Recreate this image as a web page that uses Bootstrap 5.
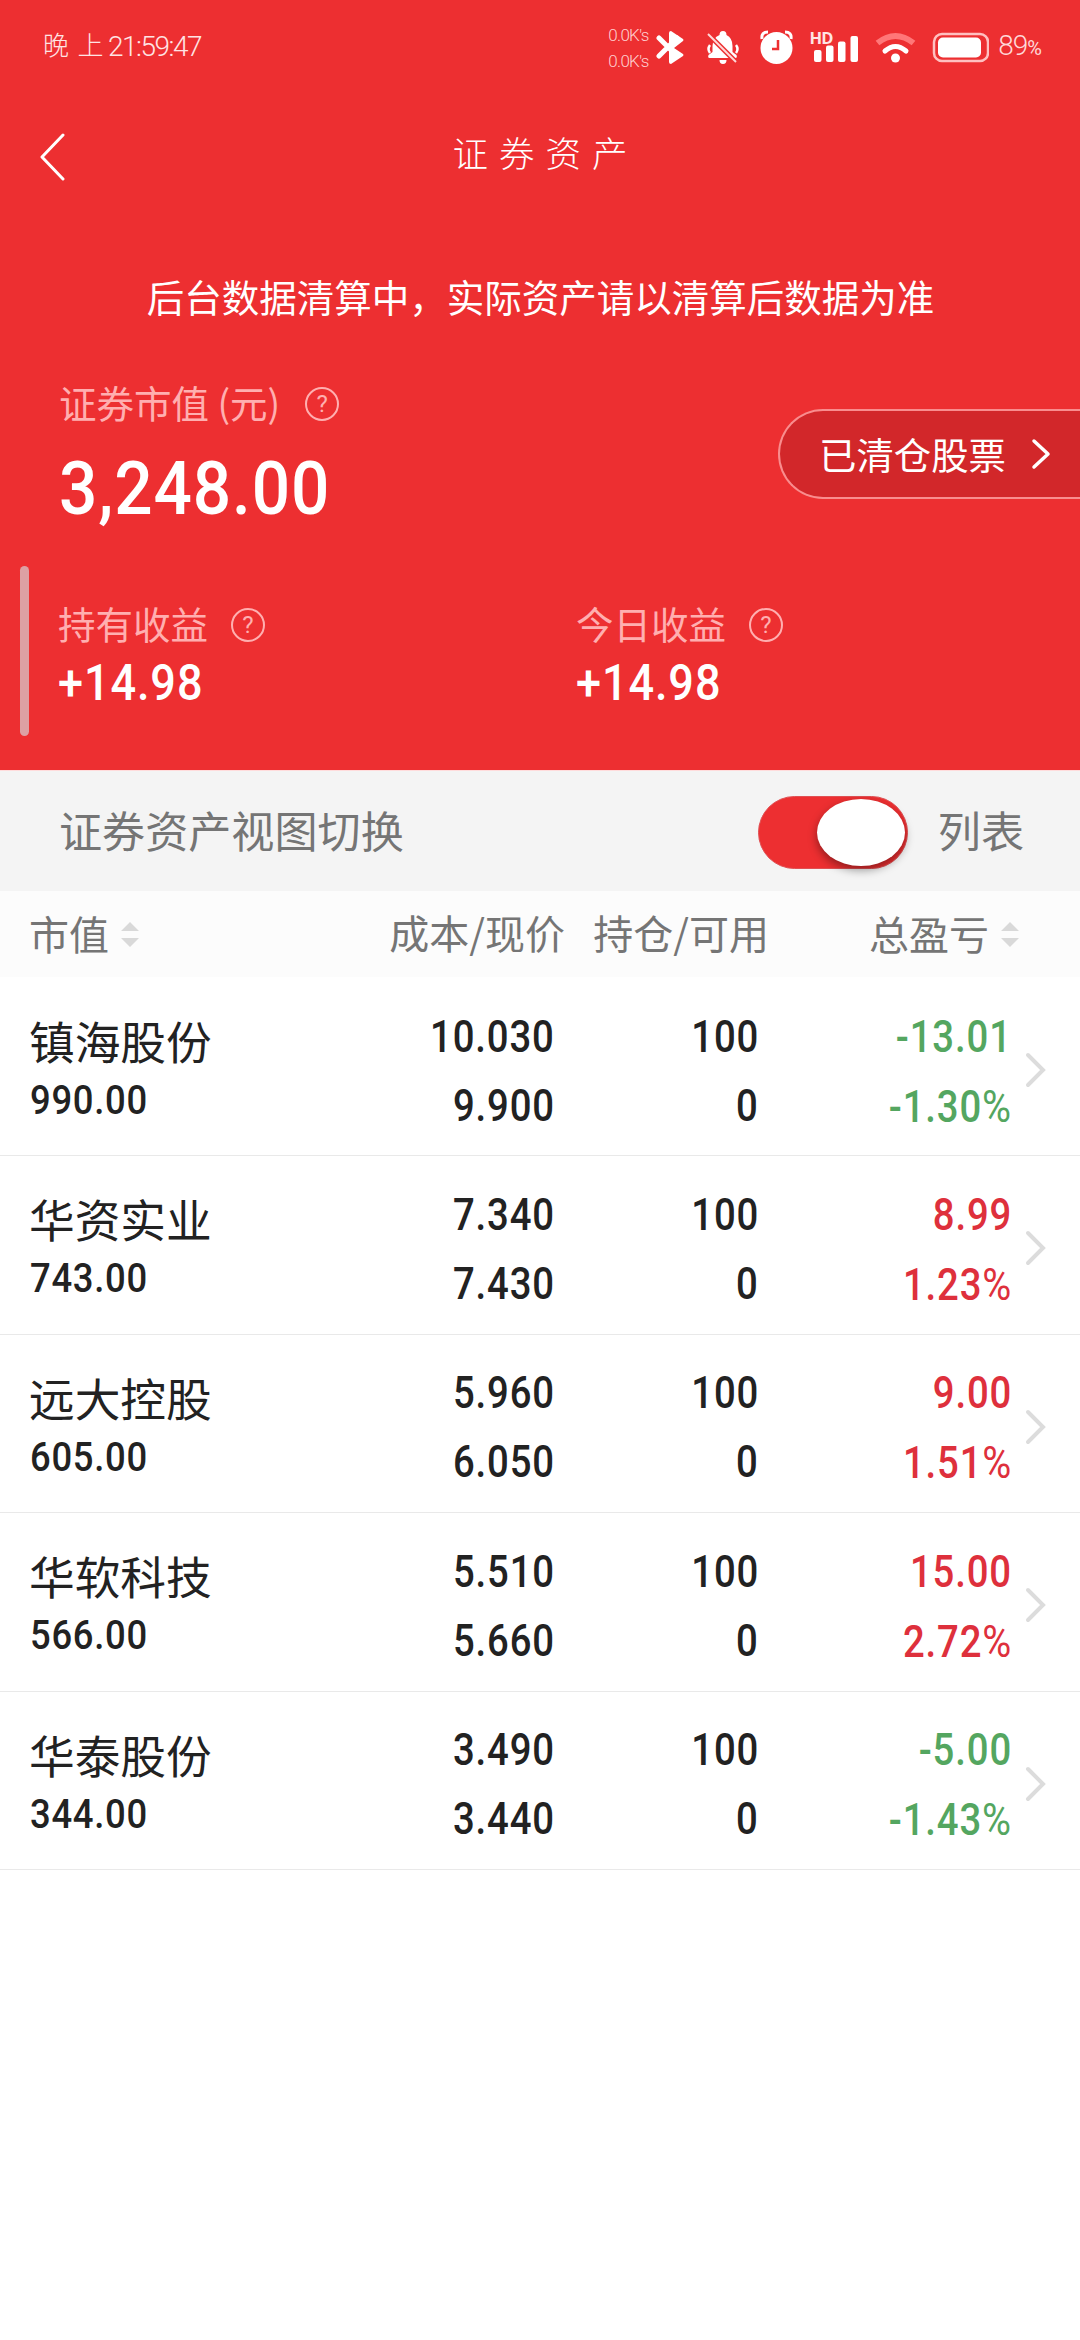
<!DOCTYPE html>
<html lang="zh-CN">
<head>
<meta charset="utf-8">
<meta name="viewport" content="width=device-width, initial-scale=1">
<title>证券资产</title>
<link href="https://cdn.jsdelivr.net/npm/bootstrap@5.3.0/dist/css/bootstrap.min.css" rel="stylesheet">
<style>
:root{--brand:#ed2f31;--soft:#ffafb0}
body{font-family:Roboto,"Noto Sans CJK SC",sans-serif;color:#222;background:#fff;width:1080px;min-height:2340px;overflow-x:hidden}
.zh{font-family:"Noto Sans CJK SC",sans-serif;white-space:nowrap}
.hero{background:var(--brand);height:770px;color:#fff}
.status-bar{height:92px;padding:0 39px 0 43px;font-weight:300}
.clock{height:92px;color:#ffe4e4}
.clock .zh{font-size:26px;letter-spacing:8.5px;font-weight:300;line-height:88px}
.clock .hms{font-size:28px;letter-spacing:-1.5px;line-height:93px;font-weight:300;margin-left:-4px}
.net-speed{font-size:17px;line-height:26px;font-weight:300;color:#ffd0d0;width:48px;letter-spacing:-.7px;padding-top:3px}
.status-icons{width:333px;height:92px}
.power{font-size:28px;font-weight:300;color:#ffd8d8;letter-spacing:-1px;line-height:94px;margin-left:9px;padding-top:2px}
.power span{font-size:20px;font-weight:400}
.title-bar{height:124px;padding:0 39px}
.title-bar .zh{font-size:35.5px;letter-spacing:11px;font-weight:300;line-height:120px;padding:0 0 3px 11px}
.title-bar svg{width:26px;height:48px;margin-top:6px}
.notice{font-size:37.5px;line-height:56px;margin-top:52px;padding-left:1px}
.soft{color:var(--soft);font-size:37.5px;line-height:50px}
.help{width:34px;height:34px;border:2px solid var(--soft);border-radius:50%;color:var(--soft);font:400 24px/30px Roboto,sans-serif;text-align:center;margin:3px 0 0 25px}
.profit-item .help{margin-left:23px}
.market{margin-top:53px;padding-left:59px;height:189px}
.num{display:inline-block;font-family:Roboto,sans-serif;font-weight:500;white-space:nowrap;transform-origin:0 50%}
.num-end{transform-origin:100% 50%}
.total{font-size:75px;line-height:88px;letter-spacing:1px;transform:scaleX(.9);margin:17px 0 0}
.cleared{width:302px;height:90px;margin-top:32px;border:2px solid #f98d8e;border-right:0;border-radius:45px 0 0 45px;background:#d2272a;padding:0 29px 0 39px;color:#fff}
.cleared .zh{font-size:37.4px;line-height:86px;padding-bottom:1px}
.profits{margin:0 0 0 20px;height:170px}
.accent{width:9px;border-radius:5px;background:#dda0a3;margin-right:29px}
.gain{font-size:49.5px;line-height:60px;letter-spacing:1px;transform:scaleX(.91);margin-top:5px}
.profit-item{padding-top:32px}
.held{flex:0 0 518px}
.view-switch{height:121px;background:#f4f4f4;border-top:1px solid #ffdcdc;padding:0 56px 0 59px;color:#757575}
.view-switch .zh{font-size:43.1px;line-height:115px;padding-bottom:3px}
.toggle{width:150px;height:73px;border-radius:37px;background:var(--brand);border:1px solid #e05053;padding:2px 2px;margin-top:2px}
.knob{width:88px;height:67px;border-radius:50%;background:#fff;box-shadow:0 4px 10px rgba(0,0,0,.4)}
.beside-toggle{margin-left:30px}
.list-head{height:87px;background:#fcfcfc;border-bottom:1px solid #fff;color:#757575;grid-template-columns:358px 178px 204px 1fr;padding:0 61px 0 29px}
.list-head .zh{font-size:40px;line-height:82px;padding-bottom:3px}
.sorter{width:18px;height:25px;fill:#d9d9d9}
.holding{height:178.4px;border-bottom:1px solid #e9e9e9;grid-template-columns:318px 208px 204px 253px 1fr;padding:0 0 0 29px}
.stock{font-size:45.7px;line-height:60px;padding-top:32px}
.worth{font-size:40px;line-height:48px;letter-spacing:.8px;transform:scaleX(.91);margin:7px 0 0 1px}
.pair{padding-top:24.5px}
.pair .num{font-size:43.5px;line-height:69px;letter-spacing:1px;transform:scaleX(.88)}
.pct i{font-style:normal;font-weight:400;font-size:45px}
.up{color:#de303c}.down{color:#54a660}
.go{width:22px;height:36px;margin:74px 0 0 13px}
</style>
<script src="https://cdn.jsdelivr.net/npm/bootstrap@5.3.0/dist/js/bootstrap.bundle.min.js"></script>
</head>
<body>
<header class="hero">
  <div class="status-bar d-flex justify-content-between align-items-center">
    <div class="clock d-flex"><span class="zh">晚上</span><span class="hms">21:59:47</span></div>
    <div class="d-flex align-items-center">
      <div class="net-speed"><div>0.0K's</div><div>0.0K's</div></div>
      <svg class="status-icons" viewBox="654 0 333 92">
        <path d="M657 38l18 18M657 56l18-18" stroke="#fff" stroke-width="5" stroke-linecap="round"/>
        <path d="M667 33q0-2 2-2l12 8q1 1 0 2l-9 7 9 6q1 1 0 2l-12 8q-2 0-2-2z" fill="#fff"/>
        <path d="M717.500 35q0-4 3.500-4t3.500 4q6 3 6 11v6l4 3q1 3-1 3h-26q-2 0-1-3l4-3v-6q0-8 7-11zM717.500 60h7q0 4-3.500 4t-3.500-4z" fill="#fff"/>
        <path d="M708 45q-3 4 0 8M734 45q3 4 0 8" stroke="#fff" stroke-width="2.500" fill="none"/>
        <path d="M706 34l28 28" stroke="#ed2f31" stroke-width="5"/><path d="M706 34l28 28" stroke="#ffd8d8" stroke-width="2"/>
        <circle cx="774.500" cy="48" r="16" fill="#fff"/>
        <path d="M760 39q-1-7 6-7M789 39q1-7-6-7" stroke="#fff" stroke-width="3" fill="none"/>
        <path d="M776 40v9h-6" stroke="#ed2f31" stroke-width="2.500" fill="none"/>
        <text x="807.500" y="44" font-family="Open Sans, sans-serif" font-size="16.500" font-weight="700" fill="#ffe4e4" textLength="24">HD</text>
        <g fill="#fff"><rect x="812" y="50" width="7.500" height="12" rx="2"/><rect x="824" y="45.500" width="7.500" height="16.500" rx="2"/><rect x="836" y="41.500" width="7.500" height="20.500" rx="2"/><rect x="848.500" y="36" width="7.500" height="26" rx="2"/></g>
        <path d="M875.500 43q18-14 36 0" stroke="#ff7778" stroke-width="6" fill="none"/>
        <path d="M883 51q10.500-9 21 0" stroke="#fff" stroke-width="5" stroke-linecap="round" fill="none"/>
        <circle cx="893.500" cy="58" r="4.500" fill="#fff"/>
        <rect x="932" y="34" width="54" height="27" rx="8" fill="none" stroke="#ffc0c0" stroke-width="2.500"/>
        <rect x="936" y="37.500" width="43" height="20" rx="5" fill="#fff"/>
      </svg>
      <div class="power">89<span>%</span></div>
    </div>
  </div>
  <nav class="title-bar d-flex align-items-center position-relative">
    <svg viewBox="0 0 26 48"><path d="M24 2L3 24l21 22" fill="none" stroke="#fff" stroke-width="3" stroke-linecap="round" stroke-linejoin="round"/></svg>
    <div class="zh position-absolute start-0 end-0 top-0 text-center">证券资产</div>
  </nav>
  <div class="notice zh text-center">后台数据清算中，实际资产请以清算后数据为准</div>
  <section class="market d-flex justify-content-between">
    <div>
      <div class="d-flex align-items-center"><span class="soft zh">证券市值 (元)</span><span class="help">?</span></div>
      <div class="num total">3,248.00</div>
    </div>
    <a class="cleared d-flex justify-content-between text-decoration-none align-items-center" href="#">
      <span class="zh">已清仓股票</span>
      <svg width="20" height="32" viewBox="0 0 20 32"><path d="M3 3l14 13L3 29" fill="none" stroke="#fff" stroke-width="3.500" stroke-linecap="round" stroke-linejoin="round"/></svg>
    </a>
  </section>
  <section class="profits d-flex">
    <div class="accent"></div>
    <div class="profit-item held">
      <div class="d-flex align-items-center"><span class="soft zh">持有收益</span><span class="help">?</span></div>
      <div class="num gain">+14.98</div>
    </div>
    <div class="profit-item flex-fill">
      <div class="d-flex align-items-center"><span class="soft zh">今日收益</span><span class="help">?</span></div>
      <div class="num gain">+14.98</div>
    </div>
  </section>
</header>
<section class="view-switch d-flex align-items-center">
  <span class="zh me-auto">证券资产视图切换</span>
  <div class="toggle d-flex justify-content-end" role="switch" aria-checked="true"><div class="knob"></div></div>
  <span class="zh beside-toggle">列表</span>
</section>
<main>
  <div class="list-head d-grid">
    <div class="d-flex align-items-center gap-2"><span class="zh">市值</span><svg class="sorter ms-1" viewBox="0 0 18 25"><path d="M0 9L9 0l9 9zM0 16h18l-9 9z"/></svg></div>
    <div class="zh text-end">成本/现价</div>
    <div class="zh text-end">持仓/可用</div>
    <div class="d-flex align-items-center justify-content-end gap-2"><span class="zh">总盈亏</span><svg class="sorter ms-1" viewBox="0 0 18 25"><path d="M0 9L9 0l9 9zM0 16h18l-9 9z"/></svg></div>
  </div>
  <div class="holding d-grid">
    <div><div class="stock zh">镇海股份</div><div class="num worth">990.00</div></div>
    <div class="pair text-end"><div class="num num-end">10.030</div><br><div class="num num-end">9.900</div></div>
    <div class="pair text-end"><div class="num num-end">100</div><br><div class="num num-end">0</div></div>
    <div class="pair text-end down"><div class="num num-end">-13.01</div><br><div class="num num-end pct">-1.30<i>%</i></div></div>
    <svg class="go" viewBox="0 0 22 36"><path d="M3 3l15 15L3 33" fill="none" stroke="#dcdcdc" stroke-width="4" stroke-linecap="round"/></svg>
  </div>
  <div class="holding d-grid">
    <div><div class="stock zh">华资实业</div><div class="num worth">743.00</div></div>
    <div class="pair text-end"><div class="num num-end">7.340</div><br><div class="num num-end">7.430</div></div>
    <div class="pair text-end"><div class="num num-end">100</div><br><div class="num num-end">0</div></div>
    <div class="pair text-end up"><div class="num num-end">8.99</div><br><div class="num num-end pct">1.23<i>%</i></div></div>
    <svg class="go" viewBox="0 0 22 36"><path d="M3 3l15 15L3 33" fill="none" stroke="#dcdcdc" stroke-width="4" stroke-linecap="round"/></svg>
  </div>
  <div class="holding d-grid">
    <div><div class="stock zh">远大控股</div><div class="num worth">605.00</div></div>
    <div class="pair text-end"><div class="num num-end">5.960</div><br><div class="num num-end">6.050</div></div>
    <div class="pair text-end"><div class="num num-end">100</div><br><div class="num num-end">0</div></div>
    <div class="pair text-end up"><div class="num num-end">9.00</div><br><div class="num num-end pct">1.51<i>%</i></div></div>
    <svg class="go" viewBox="0 0 22 36"><path d="M3 3l15 15L3 33" fill="none" stroke="#dcdcdc" stroke-width="4" stroke-linecap="round"/></svg>
  </div>
  <div class="holding d-grid">
    <div><div class="stock zh">华软科技</div><div class="num worth">566.00</div></div>
    <div class="pair text-end"><div class="num num-end">5.510</div><br><div class="num num-end">5.660</div></div>
    <div class="pair text-end"><div class="num num-end">100</div><br><div class="num num-end">0</div></div>
    <div class="pair text-end up"><div class="num num-end">15.00</div><br><div class="num num-end pct">2.72<i>%</i></div></div>
    <svg class="go" viewBox="0 0 22 36"><path d="M3 3l15 15L3 33" fill="none" stroke="#dcdcdc" stroke-width="4" stroke-linecap="round"/></svg>
  </div>
  <div class="holding d-grid">
    <div><div class="stock zh">华泰股份</div><div class="num worth">344.00</div></div>
    <div class="pair text-end"><div class="num num-end">3.490</div><br><div class="num num-end">3.440</div></div>
    <div class="pair text-end"><div class="num num-end">100</div><br><div class="num num-end">0</div></div>
    <div class="pair text-end down"><div class="num num-end">-5.00</div><br><div class="num num-end pct">-1.43<i>%</i></div></div>
    <svg class="go" viewBox="0 0 22 36"><path d="M3 3l15 15L3 33" fill="none" stroke="#dcdcdc" stroke-width="4" stroke-linecap="round"/></svg>
  </div>
</main>
</body>
</html>
